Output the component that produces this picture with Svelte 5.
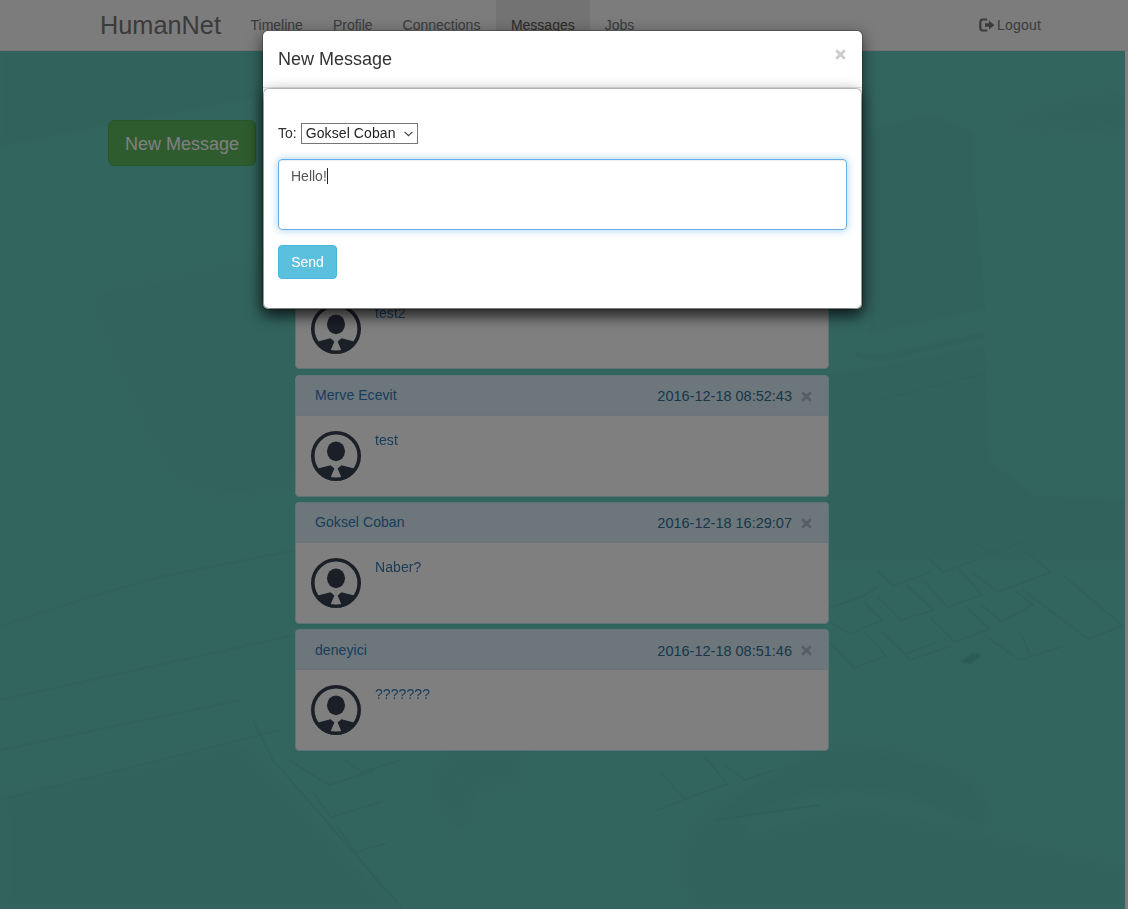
<script>
  const links = ['Timeline', 'Profile', 'Connections', 'Messages', 'Jobs'];
  const messages = [
    { from: 'Merve Ecevit', date: '2016-12-18 08:53:10', text: 'test2', covered: true },
    { from: 'Merve Ecevit', date: '2016-12-18 08:52:43', text: 'test' },
    { from: 'Goksel Coban', date: '2016-12-18 16:29:07', text: 'Naber?' },
    { from: 'deneyici', date: '2016-12-18 08:51:46', text: '???????' }
  ];
</script>

{#snippet cross()}
  <svg class="cross" width="11" height="11" viewBox="0 0 11 11"><path d="M1.2 1.2 9.8 9.8M9.8 1.2 1.2 9.8" stroke="currentColor" stroke-width="2.9" /></svg>
{/snippet}

<div class="page">
  <nav>
    <span class="brand">HumanNet</span>
    <ul>
      {#each links as link}
        <li class:active={link === 'Messages'}>{link}</li>
      {/each}
    </ul>
    <div class="logout">
      <svg width="16" height="14" viewBox="0 0 16 14">
        <path d="M8.2 1.5H4A2.5 2.5 0 0 0 1.3 4v6A2.5 2.5 0 0 0 4 12.5h4.3" fill="none" stroke="currentColor" stroke-width="2.2" />
        <path d="M6 5.2h4V2.4L15.4 7 10 11.6V8.8H6z" fill="currentColor" />
      </svg>
      <span>Logout</span>
    </div>
  </nav>

  <main>
    <svg class="scene" viewBox="0 51 1125 858" width="1125" height="858" aria-hidden="true">
      <defs>
        <filter id="soft" x="-10%" y="-10%" width="120%" height="120%"><feGaussianBlur stdDeviation="6" /></filter>
        <filter id="edge"><feGaussianBlur stdDeviation="1" /></filter>
        <filter id="line"><feGaussianBlur stdDeviation="0.6" /></filter>
      </defs>
      <g filter="url(#edge)" fill="#5fc0b3">
        <path d="M0 51h263v45L0 146z" opacity=".5" />
        <path d="M870 130l60-15 45 18v60l10 115-115 25z" opacity=".6" />
        <path d="M850 350q20 8 40 3l95-21v6l-95 22q-25 4-40-10z" opacity=".7" />
        <path d="M828 375l157-30 5 115 45 35 90 5v60H828z" opacity=".35" />
      </g>
      <g filter="url(#soft)" fill="#5fc0b3">
        <path d="M95 298l200-42v224q-80 25-120-10-30-50-80-172z" opacity=".3" />
        <path d="M1015 125q45-25 110-30v35z" opacity=".4" />
        <path d="M828 751q80-5 145 35l15 34-15 2q-80-45-165-30l-80 30 10-25z" opacity=".6" />
        <path d="M735 796q20 30-5 110h-35q-35-70 40-110z" opacity=".35" />
        <path d="M740 840l120-30 265 60v39H720z" opacity=".35" />
        <path d="M240 745l150 164H0V800z" opacity=".35" />
        <path d="M430 785l30 45 15-45 45-5v-25h-60z" opacity=".4" />
      </g>
      <g filter="url(#line)" fill="none" stroke="#5cbbae" stroke-width="1.8" opacity=".6">
        <path d="M0 626l90-29 70-20 135-27M0 700l295-65M0 750l240-50M0 800l280-70" opacity=".7" />
        <path d="M880 400l105-27M253 720l20 40 130 149" />
        <path d="M289 760l40 25 45-14M345 760l17 12 40-12M311 790l20 27 50-15M336 825l20 27 30-9M358 857l24 30" />
        <g stroke-linejoin="round">
          <path d="M878 571l15 15 38-14M925 555l18 17 34-12M974 541l17 13 38-15" />
          <path d="M830 608l31-11 17-10M878 597l23 23 33-10-28-25M924 581l24 26 34-12-23-26M972 572l26 20 53-20-27-22" />
          <path d="M830 622l20 12 32-14-18-18M881 631l24 23 33-12M930 617l25 25 34-13-24-23M981 604l20 18 32-17-18-14M1023 590l65 49 35-13-60-51" />
          <path d="M830 642l24 26 32-12-22-25M886 635l24 25 39-13M1020 632l10 23M984 635l36 25 45-14" />
        </g>
        <path d="M660 772l25 27 42-15-22-27M725 765l20 15 30-10M655 811l48-19M715 820l105-15" />
      </g>
      <path d="M960 662l12-9 11 1-13 10z" fill="#57aa9f" opacity=".7" filter="url(#edge)" />
    </svg>
    <div class="content">
      <button class="compose">New Message</button>
      <section>
        {#each messages as m}
          <article>
            <header>
              {#if !m.covered}
                <a href="#top">{m.from}</a>
                <span class="date">{m.date}</span>
                {@render cross()}
              {/if}
            </header>
            <div class="message">
              <svg width="50" height="50" viewBox="0 0 50 50" fill="#353f50">
                <circle cx="25" cy="25" r="23.2" fill="none" stroke="#353f50" stroke-width="3.6" />
                <ellipse cx="25" cy="20.3" rx="9" ry="9.9" />
                <path d="M6 37.8 19.5 34.2l3.9 3.3-3.6 8.5 2.8 3.8C16 49.4 9.5 45 6 37.8zM44 37.8 30.5 34.2l-3.9 3.3 3.6 8.5-2.8 3.8C34 49.4 40.5 45 44 37.8z" />
              </svg>
              <a href="#top">{m.text}</a>
            </div>
          </article>
        {/each}
      </section>
    </div>
  </main>
</div>

<div class="backdrop"></div>

<div class="modal">
  <div class="title">
    <h4>New Message</h4>
    {@render cross()}
  </div>
  <form>
    <label>To: <span class="select">Goksel Coban
      <svg width="9" height="6" viewBox="0 0 9 6"><path d="M.6.8 4.5 4.7 8.4.8" fill="none" stroke="#444" stroke-width="1.2" /></svg></span></label>
    <div class="input">Hello!<i></i></div>
    <button type="button" class="send">Send</button>
  </form>
</div>

<style>
  :global(body) { margin: 0; background: #fff; overflow: hidden; }
  .page, .modal { font: 14px/20px "Liberation Sans", Arial, sans-serif; color: #333; box-sizing: border-box; }
  .page { height: 909px; overflow: hidden; isolation: isolate; }
  button { font-family: inherit; box-sizing: border-box; color: #fff; padding: 0; }
  a { color: #337ab7; text-decoration: none; letter-spacing: .07px; }
  svg { flex: none; }
  nav { height: 51px; box-sizing: border-box; background: #f8f8f8; border-bottom: 1px solid #e7e7e7; display: flex; color: #777; padding-left: 100px; }
  .brand { font-size: 25.3px; line-height: 50px; width: 121px; margin-right: 14.5px; }
  ul { display: flex; margin: 0; padding: 0; list-style: none; }
  li { padding: 15px; }
  li:nth-child(3) { padding-right: 15.5px; }
  .active { background: #e7e7e7; color: #555; }
  .logout { display: flex; gap: 2px; margin-left: auto; padding: 15px 87px 0 0; letter-spacing: .2px; }
  .logout svg { margin-top: 3px; }
  main { width: 1125px; height: 858px; background: #66cbbe; display: grid; }
  .scene, .content { grid-area: 1 / 1; }
  .content { z-index: 1; display: flex; align-items: flex-start; padding-left: 108px; }
  .compose { margin-top: 69px; width: 148px; height: 46px; border: 1px solid #4cae4c; border-radius: 6px; background: #5cb85c; font-size: 18px; padding-top: 2px; flex: none; }
  section { margin: 196.4px 0 0 39px; width: 534px; display: flex; flex-direction: column; gap: 5.2px; }
  article { box-sizing: border-box; height: 122px; border: 1px solid #bce8f1; border-radius: 4px; background: #fff; box-shadow: 0 1px 1px rgba(0,0,0,.05); overflow: hidden; }
  article header { height: 40.2px; box-sizing: border-box; padding: 0 16px 0 19px; background: #d9edf7; border-bottom: 1px solid #d3eaf4; display: flex; align-items: center; }
  .date { margin: 2px 9px 0 auto; color: #31708f; font-size: 14.5px; }
  header .cross { color: #aebec5; margin-top: 2px; }
  .message { display: flex; gap: 14px; padding: 15px; }
  .message a { margin-top: -.8px; }
  .backdrop { position: fixed; inset: 0; background: rgba(0,0,0,.5); }
  .modal { position: absolute; top: 30px; left: 262px; width: 601px; height: 280px; border: 1px solid rgba(0,0,0,.2); border-radius: 6px; background: #fff; background-clip: padding-box; box-shadow: 0 5px 15px rgba(0,0,0,.5); display: flex; flex-direction: column; }
  .title { height: 57px; box-sizing: border-box; flex: none; padding: 15px 16px 0 15px; border-bottom: 1px solid #e5e5e5; display: flex; justify-content: space-between; }
  h4 { margin: 0; font-size: 18px; line-height: 26px; font-weight: 500; }
  .title .cross { color: #ccc; margin-top: 3px; }
  form { flex: 1; box-sizing: border-box; border: 1px solid rgba(0,0,0,.2); border-radius: 6px; background: #fff; background-clip: padding-box; box-shadow: 0 5px 15px rgba(0,0,0,.5); padding: 34px 14px 0; display: flex; flex-direction: column; align-items: flex-start; }
  label { display: flex; gap: 4px; }
  .select { width: 117px; height: 21px; box-sizing: border-box; border: 1px solid #777; padding: 0 4px; line-height: 19px; color: #222; letter-spacing: .1px; display: flex; align-items: center; justify-content: space-between; }
  .input { margin-top: 15px; width: 569px; height: 71px; box-sizing: border-box; border: 1px solid #66afe9; border-radius: 4px; padding: 6px 12px; color: #555; box-shadow: inset 0 1px 1px rgba(0,0,0,.075), 0 0 8px rgba(102,175,233,.6); display: flex; }
  .input i { width: 1px; height: 16px; margin-top: 2px; background: #222; }
  .send { margin-top: 15px; width: 59px; height: 34px; border: 1px solid #46b8da; border-radius: 4px; background: #5bc0de; font-size: 14px; }
</style>
